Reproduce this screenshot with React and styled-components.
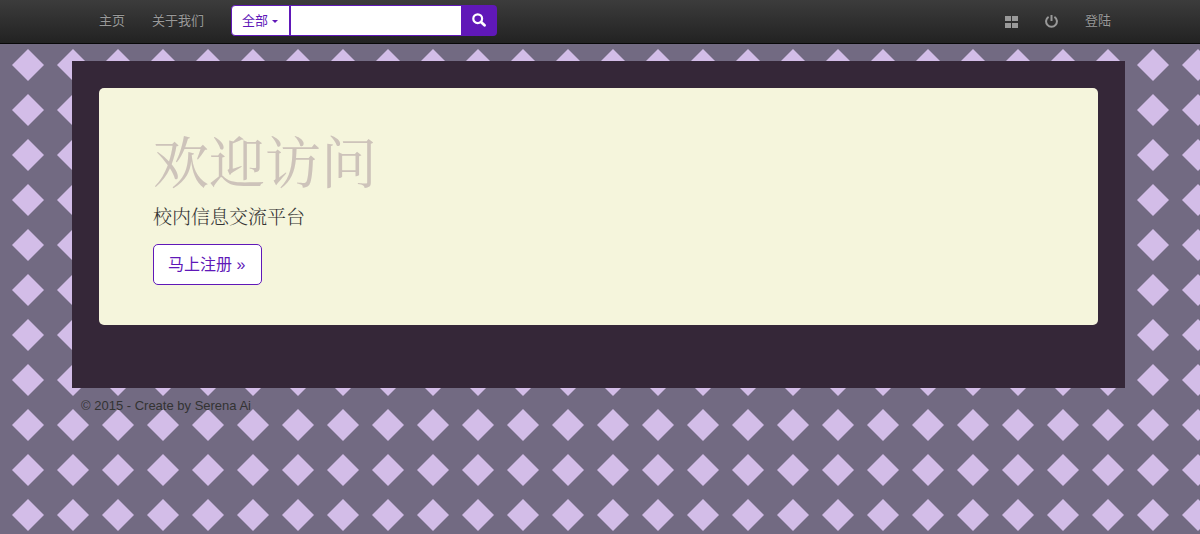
import React from "react";
import styled, { createGlobalStyle } from "styled-components";

const violet = "#6018b8";
const sans = '"Liberation Sans", "Noto Sans CJK SC", sans-serif';

const diamond = `url("data:image/svg+xml,%3Csvg xmlns='http://www.w3.org/2000/svg' width='45' height='45'%3E%3Cpath d='M28 4L44 20L28 36L12 20Z' fill='%23d3bde8'/%3E%3C/svg%3E")`;

const GlobalStyle = createGlobalStyle`
  *, *::before, *::after { box-sizing: border-box; }
  html { background: #726a82 ${diamond} 0 0 / 45px 45px; }
  body {
    margin: 0;
    color: #333;
    font-family: ${sans};
    font-size: 13px;
    line-height: 18px;
  }
`;

const Navbar = styled.header`
  height: 44px;
  padding-right: 3px;
  background: linear-gradient(#3c3c3c, #222);
  border-bottom: 1px solid #080808;
`;

const Container = styled.div`
  max-width: 1053px;
  margin: 0 auto;
`;

const NavRow = styled(Container)`
  display: flex;
  align-items: flex-start;
  padding: 0 0 0 14px;
`;

const NavGroup = styled.nav`
  display: flex;
`;

const NavLink = styled.a`
  display: flex;
  align-items: center;
  height: 41px;
  padding: 0 14px 0 13px;
  color: #999;
  text-decoration: none;
  text-shadow: 0 -1px 0 rgba(0, 0, 0, 0.25);
  svg { display: block; margin-top: 2px; }
`;

const Search = styled.form`
  display: flex;
  height: 31px;
  margin: 5px auto 0 13px;
`;

const Category = styled.button`
  display: flex;
  align-items: center;
  gap: 4px;
  width: 59px;
  padding: 0 10px;
  border: 1px solid ${violet};
  border-radius: 4px 0 0 4px;
  background: #fff;
  color: ${violet};
  font: 13px/18px ${sans};
  white-space: nowrap;
`;

const Caret = styled.span`
  border: 3px solid transparent;
  border-top-color: currentColor;
  border-bottom: 0;
  margin-top: 2px;
`;

const SearchInput = styled.input`
  width: 171px;
  min-width: 0;
  padding: 4px 11px;
  border: 1px solid ${violet};
  border-right: 0;
  border-radius: 0;
  background: #fff;
  color: #555;
  font: 13px/18px ${sans};
`;

const SearchButton = styled.button`
  display: flex;
  align-items: center;
  justify-content: center;
  width: 36px;
  padding: 0 0 2px;
  border: 0;
  border-radius: 0 4px 4px 0;
  background: ${violet};
  color: #fff;
`;

const Page = styled.div`
  padding: 17px 3px 0 0;
`;

const Main = styled(Container).attrs({ as: "main" })`
  padding: 27px 27px 63px;
  background: #352738;
`;

const Jumbotron = styled.section`
  padding: 40px 54px;
  border-radius: 5px;
  background: #f5f5dc;
`;

const Title = styled.h1`
  margin: 0 0 12px;
  color: #cdc3ba;
  font: 400 56px/62px "Noto Serif CJK SC", "Noto Sans CJK SC", serif;
`;

const Lead = styled.p`
  margin: 0 0 14px;
  font: 300 19px/28px "Noto Serif CJK SC", "Noto Sans CJK SC", serif;
`;

const Register = styled.a`
  display: inline-block;
  padding: 9px 16px 8px 14px;
  border: 1px solid ${violet};
  border-radius: 5px;
  background: #fff;
  color: ${violet};
  font-size: 16px;
  line-height: 22px;
  text-decoration: none;
  vertical-align: top;
`;

const Footer = styled(Container).attrs({ as: "footer" })`
  padding: 9px;
`;

export default function App() {
  return (
    <>
      <GlobalStyle />
      <Navbar>
        <NavRow>
          <NavGroup>
            <NavLink href="#home">主页</NavLink>
            <NavLink href="#about">关于我们</NavLink>
          </NavGroup>
          <Search role="search" onSubmit={(e) => e.preventDefault()}>
            <Category type="button" aria-haspopup="true">
              全部
              <Caret />
            </Category>
            <SearchInput type="text" aria-label="搜索" />
            <SearchButton type="submit" aria-label="搜索">
              <svg width="14" height="14" viewBox="0 0 14 14" fill="none" stroke="currentColor">
                <circle cx="5.7" cy="5.7" r="4.4" strokeWidth="2.2" />
                <path d="M9 9l3.5 3.2" strokeWidth="2.8" strokeLinecap="round" />
              </svg>
            </SearchButton>
          </Search>
          <NavGroup>
            <NavLink href="#panels" aria-label="面板">
              <svg width="13" height="12" viewBox="0 0 13 12" fill="currentColor">
                <path d="M0 0h6v5H0zM7 0h6v5H7zM0 7h6v5H0zM7 7h6v5H7z" />
              </svg>
            </NavLink>
            <NavLink href="#power" aria-label="退出">
              <svg width="13" height="13" viewBox="0 0 13 13" fill="none" stroke="currentColor" strokeWidth="2">
                <path d="M3.6 1.8A5.4 5.4 0 1 0 9.4 1.8" />
                <path d="M6.5 0v6" />
              </svg>
            </NavLink>
            <NavLink href="#login">登陆</NavLink>
          </NavGroup>
        </NavRow>
      </Navbar>
      <Page>
        <Main>
          <Jumbotron>
            <Title>欢迎访问</Title>
            <Lead>校内信息交流平台</Lead>
            <Register href="#register">马上注册 »</Register>
          </Jumbotron>
        </Main>
        <Footer>© 2015 - Create by Serena Ai</Footer>
      </Page>
    </>
  );
}
